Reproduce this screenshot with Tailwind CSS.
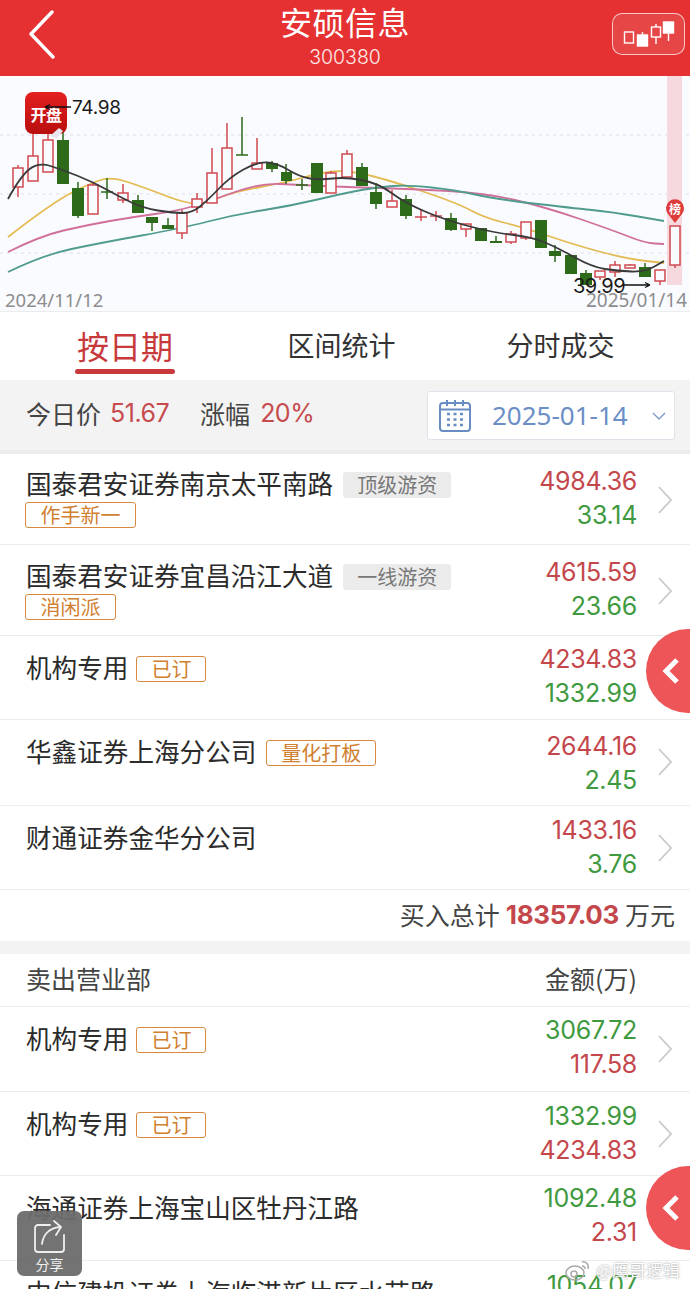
<!DOCTYPE html>
<html lang="zh">
<head>
<meta charset="UTF-8" />
<meta name="viewport" content="width=device-width, initial-scale=1.0" />
<title>安硕信息</title>
<script src="https://cdn.jsdelivr.net/npm/@tailwindcss/browser@4"></script>
</head>
<body class="bg-white">
<div class="relative w-[690px] h-[1289px] overflow-hidden bg-white text-[#2b2b2b] font-['Noto_Sans_CJK_SC','Noto_Sans',sans-serif]">

  <!-- header -->
  <header class="relative h-[76px] bg-[#e53131] text-white flex flex-col items-center">
    <svg class="absolute left-[28px] top-[10px]" width="28" height="50" viewBox="0 0 28 50" fill="none" stroke="#fff" stroke-width="3.4" stroke-linecap="round" stroke-linejoin="round"><path d="M24 2 3 24l22 23"/></svg>
    <h1 class="text-[32px] leading-[38px] mt-[2px] tracking-[0.5px]">安硕信息</h1>
    <p class="text-[19.500px] leading-[24px] mt-[5px] font-['Inter',sans-serif] font-light text-white/90">300380</p>
    <div class="absolute left-[612px] top-[13px] w-[73px] h-[42px] rounded-[10px] border border-white/70 bg-white/10 flex items-center justify-center">
      <svg width="60" height="32" viewBox="0 0 60 32" fill="none" stroke="#fff" stroke-width="1.400"><rect x="5.500" y="14" width="9" height="11"/><rect x="18.500" y="17" width="10" height="11" fill="#fff"/><path d="M23.500 14v3"/><rect x="32.500" y="9" width="9" height="10"/><path d="M37 6v3M37 19v7"/><rect x="44.500" y="4" width="10" height="11" fill="#fff"/><path d="M49.500 15v8"/></svg>
    </div>
  </header>

  <!-- k-line chart -->
  <section class="relative h-[236px] bg-[#fafbff] border-b border-[#ececec]">
    <svg class="absolute left-0 top-0" width="690" height="236" viewBox="0 76 690 236" fill="none">
      <path d="M0 135H690M0 194H690M0 253H690" stroke="#dcdfe6" stroke-dasharray="3 4"/>
      <rect x="667" y="76" width="15" height="209" fill="#f6d9df"/>
      <path data-pts="8 237 53 202 93 182 112 177 143 187 187 204 207 203 233 192 283 183 320 173 345 170 382 178 455 202 485 218 522 227 578 246 628 259 664 263" stroke="#e3bb52" stroke-width="1.800"/>
      <path data-pts="8 252 40 236 87 225 133 217 177 211 207 202 260 183 300 185 345 187 412 189 485 193 545 207 612 230 645 243 664 244" stroke="#d0709a" stroke-width="1.800"/>
      <path data-pts="8 272 43 255 100 243 183 228 233 215 290 206 345 193 378 187 408 185 455 190 495 199 572 208 612 212 664 221" stroke="#4f9c8e" stroke-width="1.800"/>
      <!-- red wicks -->
      <path d="M18 165V197M33 113V181M48 130V172M93 183V214M123 184V203M182 210V239M197 193V213M212 148V203M227 123V189M257 138V169M331 171V193M347 150V177M392 190V207M421 210V221M436 211V221M466 224V237M511 231V244M526 222V240M600 271V280M615 261V277M630 264V268M660 270V285M675 226V268" stroke="#cf4a50" stroke-width="1.500"/>
      <!-- green wicks -->
      <path d="M63 130V184M78 182V218M107 178V199M138 195V213M152 217V231M168 218V229M242 117V155M272 161V172M286 164V184M302 179V190M362 163V186M376 183V209M406 195V219M451 213V231M496 236V243M555 245V262M586 270V285M645 263V277" stroke="#2d6a1a" stroke-width="1.500"/>
      <!-- red bodies -->
      <path d="M13 168h10v19h-10zM28 156h10v25h-10zM43 140h10v32h-10zM88 185h10v29h-10zM118 193h10v7h-10zM177 213h10v20h-10zM192 199h10v8h-10zM207 173h10v30h-10zM222 148h10v41h-10zM252 163h10v6h-10zM326 173h10v20h-10zM342 154h10v23h-10zM387 201h10v6h-10zM461 224h10v5h-10zM506 234h10v8h-10zM521 222h10v16h-10zM595 271h10v6h-10zM610 265h10v7h-10zM625 265h10v3h-10zM655 270h10v11h-10zM670 226h10v39h-10z" fill="#fafbff" stroke="#cf4a50" stroke-width="1.500"/>
      <path d="M415 217h12M430 216h12" stroke="#cf4a50" stroke-width="1.500"/>
      <!-- green bodies -->
      <path d="M57 140h12v44h-12zM72 188h12v28h-12zM132 200h12v13h-12zM146 217h12v6h-12zM162 225h12v4h-12zM266 163h12v6h-12zM281 172h11v9h-11zM311 163h12v30h-12zM356 167h12v19h-12zM370 192h12v12h-12zM400 199h12v17h-12zM445 218h12v12h-12zM475 228h12v13h-12zM490 241h12v2h-12zM535 220h12v28h-12zM549 251h12v5h-12zM565 255h12v19h-12zM580 273h12v12h-12zM639 267h12v10h-12z" fill="#2d6a1a"/>
      <path d="M236 155h12M101 192h12M296 185h12" stroke="#2d6a1a" stroke-width="1.600"/>
      <!-- MA5 -->
      <path data-pts="8 199 20 177 38 162 63 170 93 182 120 197 143 208 173 213 192 213 208 200 230 177 257 162 277 163 300 177 320 180 345 177 378 183 405 203 445 220 495 233 532 237 558 248 592 267 618 271 645 272 664 261" stroke="#3a3a3a" stroke-width="1.800"/>
      <path d="M623 285H650M650 285l-5-2.500M650 285l-5 2.500" stroke="#111" stroke-width="1.300"/>
      <path d="M668 214a9 9 0 1 1 14 0l-7 9z" fill="#df3b3b"/>
    </svg>
    <div class="absolute left-[25px] top-[16px] w-[42px] h-[42px] rounded-[8px] bg-gradient-to-b from-[#e41f1f] to-[#b80f0f] flex items-center justify-center text-white text-[16px] font-bold tracking-[-0.5px] pt-[2px]">开盘</div>
    <svg class="absolute left-[40px] top-[24px]" width="36" height="38" viewBox="0 0 36 38" fill="none">
      <path d="M5 7H31M5 7l5-2.500M5 7l5 2.500" stroke="#111" stroke-width="1.300"/>
      <path d="M10 36l9-8 4 3-6 7z" fill="#e9e4ee"/>
    </svg>
    <span class="absolute left-[72px] top-[20px] text-[19px] tracking-[-0.3px] leading-[24px] font-['Inter',sans-serif] text-[#1a1a1a]">74.98</span>
    <span class="absolute left-[5px] top-[212px] text-[18.500px] leading-[24px] font-['Noto_Sans',sans-serif] text-[#8d8d8d]">2024/11/12</span>
    <span class="absolute left-[586px] top-[212px] text-[19px] leading-[24px] font-['Noto_Sans',sans-serif] text-[#8d8d8d] whitespace-nowrap">2025/01/14</span>
    <span class="absolute left-[573px] top-[198px] text-[20px] tracking-[-0.5px] leading-[24px] font-['Inter',sans-serif] text-[#1a1a1a]">39.99</span>
    <span class="absolute left-[668px] top-[125px] w-[14px] text-center text-white text-[12px] leading-[16px] font-bold">榜</span>
  </section>

  <!-- tabs -->
  <nav class="h-[68px] flex items-start">
    <div class="w-[250px] flex flex-col items-center">
      <span class="text-[32px] leading-[44px] mt-[11px] text-[#c8393c]">按日期</span>
      <span class="w-[100px] h-[5px] rounded-full bg-[#c8393c] mt-[2px]"></span>
    </div>
    <span class="w-[183px] text-center text-[27px] leading-[40px] mt-[13px] text-[#333]">区间统计</span>
    <span class="w-[257px] pr-[2px] text-center text-[27px] leading-[40px] mt-[13px] text-[#333]">分时成交</span>
  </nav>

  <!-- date filter -->
  <div class="h-[74px] bg-[#f3f3f3] border-b-[4px] border-[#ececec] flex items-center pl-[26px] pr-[15px] pb-[2px]">
    <span class="text-[25px] text-[#444]">今日价</span>
    <span class="text-[25px] text-[#c64a4e] ml-[9px] font-['Inter',sans-serif] tracking-[-0.5px]">51.67</span>
    <span class="text-[25px] text-[#444] ml-[31px]">涨幅</span>
    <span class="text-[25px] text-[#c64a4e] ml-[10px] font-['Inter',sans-serif] tracking-[-0.5px]">20%</span>
    <div class="ml-auto w-[248px] h-[49px] mt-[3px] bg-white border border-[#e0e3ea] rounded-[3px] flex items-center pl-[11px] pr-[8px]">
      <svg width="32" height="34" viewBox="0 0 32 34" fill="none" stroke="#6a8cc4" stroke-width="2"><rect x="1" y="4" width="30" height="28" rx="3"/><path d="M1 10.500H31M8 1v6M16 1v6M24 1v6"/><path d="M8 15h3M14.500 15h3M21 15h3M8 20.500h3M14.500 20.500h3M21 20.500h3M8 26h3M14.500 26h3M21 26h3" stroke-width="2.600"/></svg>
      <span class="ml-[21px] text-[26px] text-[#6b8ec6] font-['Noto_Sans',sans-serif]">2025-01-14</span>
      <svg class="ml-auto" width="14" height="8" viewBox="0 0 14 8" fill="none" stroke="#7a97c8" stroke-width="1.300"><path d="M1 1l6 6 6-6"/></svg>
    </div>
  </div>

  <!-- buy list -->
  <div>
    <div class="h-[91px] border-b border-[#ededed] flex pl-[26px] pr-[18px]">
      <div class="flex-1 pt-[13px]">
        <div class="flex items-center h-[36px]">
          <span class="text-[25.600px] leading-[36px] mb-[4px]">国泰君安证券南京太平南路</span>
          <span class="ml-[10px] h-[26px] w-[108px] rounded-[3px] bg-[#ebebeb] text-[#777] text-[20px] leading-[26px] text-center">顶级游资</span>
        </div>
        <span class="block w-[111px] h-[26px] border border-[#d9883e] rounded-[3px] text-[#d0802f] text-[20px] leading-[24px] text-center -ml-[1px] mt-[-1px]">作手新一</span>
      </div>
      <div class="w-[120px] pt-[10px] text-right text-[25px] tracking-[-0.300px] leading-[34px] font-['Inter',sans-serif]"><p class="text-[#c4474c]">4984.36</p><p class="text-[#3f9a3f]">33.14</p></div>
      <svg class="ml-[21px] mt-[32px]" width="14" height="28" viewBox="0 0 14 28" fill="none" stroke="#c9c9c9" stroke-width="1.800"><path d="M1 1l12 13L1 27"/></svg>
    </div>
    <div class="h-[91px] border-b border-[#ededed] flex pl-[26px] pr-[18px]">
      <div class="flex-1 pt-[14px]">
        <div class="flex items-center h-[36px]">
          <span class="text-[25.600px] leading-[36px] mb-[4px]">国泰君安证券宜昌沿江大道</span>
          <span class="ml-[10px] h-[26px] w-[108px] rounded-[3px] bg-[#ebebeb] text-[#777] text-[20px] leading-[26px] text-center">一线游资</span>
        </div>
        <span class="block w-[91px] h-[26px] border border-[#d9883e] rounded-[3px] text-[#d0802f] text-[20px] leading-[24px] text-center -ml-[1px] mt-[-1px]">消闲派</span>
      </div>
      <div class="w-[120px] pt-[10px] text-right text-[25px] tracking-[-0.300px] leading-[34px] font-['Inter',sans-serif]"><p class="text-[#c4474c]">4615.59</p><p class="text-[#3f9a3f]">23.66</p></div>
      <svg class="ml-[21px] mt-[32px]" width="14" height="28" viewBox="0 0 14 28" fill="none" stroke="#c9c9c9" stroke-width="1.800"><path d="M1 1l12 13L1 27"/></svg>
    </div>
    <div class="h-[84px] border-b border-[#ededed] flex pl-[26px] pr-[18px]">
      <div class="flex-1 pt-[15px]">
        <div class="flex items-center h-[36px]">
          <span class="text-[25.600px] leading-[36px] mb-[4px]">机构专用</span>
          <span class="ml-[8px] h-[26px] w-[70px] border border-[#d9883e] rounded-[3px] text-[#d0802f] text-[20px] leading-[24px] text-center">已订</span>
        </div>
      </div>
      <div class="w-[120px] pt-[6px] text-right text-[25px] tracking-[-0.300px] leading-[34px] font-['Inter',sans-serif]"><p class="text-[#c4474c]">4234.83</p><p class="text-[#3f9a3f]">1332.99</p></div>
      <svg class="ml-[21px] mt-[28px]" width="14" height="28" viewBox="0 0 14 28" fill="none" stroke="#c9c9c9" stroke-width="1.800"><path d="M1 1l12 13L1 27"/></svg>
    </div>
    <div class="h-[86px] border-b border-[#ededed] flex pl-[26px] pr-[18px]">
      <div class="flex-1 pt-[15px]">
        <div class="flex items-center h-[36px]">
          <span class="text-[25.600px] leading-[36px] mb-[4px]">华鑫证券上海分公司</span>
          <span class="ml-[10px] h-[26px] w-[110px] border border-[#d9883e] rounded-[3px] text-[#d0802f] text-[20px] leading-[24px] text-center">量化打板</span>
        </div>
      </div>
      <div class="w-[120px] pt-[9px] text-right text-[25px] tracking-[-0.300px] leading-[34px] font-['Inter',sans-serif]"><p class="text-[#c4474c]">2644.16</p><p class="text-[#3f9a3f]">2.45</p></div>
      <svg class="ml-[21px] mt-[28px]" width="14" height="28" viewBox="0 0 14 28" fill="none" stroke="#c9c9c9" stroke-width="1.800"><path d="M1 1l12 13L1 27"/></svg>
    </div>
    <div class="h-[84px] border-b border-[#ededed] flex pl-[26px] pr-[18px]">
      <div class="flex-1 pt-[13px]">
        <span class="text-[25.600px] leading-[36px]">财通证券金华分公司</span>
      </div>
      <div class="w-[120px] pt-[7px] text-right text-[25px] tracking-[-0.300px] leading-[34px] font-['Inter',sans-serif]"><p class="text-[#c4474c]">1433.16</p><p class="text-[#3f9a3f]">3.76</p></div>
      <svg class="ml-[21px] mt-[28px]" width="14" height="28" viewBox="0 0 14 28" fill="none" stroke="#c9c9c9" stroke-width="1.800"><path d="M1 1l12 13L1 27"/></svg>
    </div>
    <div class="h-[51px] flex items-center justify-end pr-[15px] pb-[2px] text-[25px] text-[#444]">
      买入总计<span class="mx-[6px] text-[26px] text-[#c4474c] font-bold font-['Inter',sans-serif] tracking-[-0.300px]">18357.03</span>万元
    </div>
  </div>

  <div class="h-[13px] bg-[#f3f3f3]"></div>

  <!-- sell list -->
  <div>
    <div class="h-[53px] border-b border-[#ededed] flex items-center justify-between pl-[26px] pr-[53px] pb-[2px] text-[25px] text-[#444]">
      <span>卖出营业部</span><span>金额(万)</span>
    </div>
    <div class="h-[85px] border-b border-[#ededed] flex pl-[26px] pr-[18px]">
      <div class="flex-1 pt-[15px]">
        <div class="flex items-center h-[36px]">
          <span class="text-[25.600px] leading-[36px] mb-[4px]">机构专用</span>
          <span class="ml-[8px] h-[26px] w-[70px] border border-[#d9883e] rounded-[3px] text-[#d0802f] text-[20px] leading-[24px] text-center">已订</span>
        </div>
      </div>
      <div class="w-[120px] pt-[6px] text-right text-[25px] tracking-[-0.300px] leading-[34px] font-['Inter',sans-serif]"><p class="text-[#3f9a3f]">3067.72</p><p class="text-[#c4474c]">117.58</p></div>
      <svg class="ml-[21px] mt-[28px]" width="14" height="28" viewBox="0 0 14 28" fill="none" stroke="#c9c9c9" stroke-width="1.800"><path d="M1 1l12 13L1 27"/></svg>
    </div>
    <div class="h-[84px] border-b border-[#ededed] flex pl-[26px] pr-[18px]">
      <div class="flex-1 pt-[15px]">
        <div class="flex items-center h-[36px]">
          <span class="text-[25.600px] leading-[36px] mb-[4px]">机构专用</span>
          <span class="ml-[8px] h-[26px] w-[70px] border border-[#d9883e] rounded-[3px] text-[#d0802f] text-[20px] leading-[24px] text-center">已订</span>
        </div>
      </div>
      <div class="w-[120px] pt-[7px] text-right text-[25px] tracking-[-0.300px] leading-[34px] font-['Inter',sans-serif]"><p class="text-[#3f9a3f]">1332.99</p><p class="text-[#c4474c]">4234.83</p></div>
      <svg class="ml-[21px] mt-[28px]" width="14" height="28" viewBox="0 0 14 28" fill="none" stroke="#c9c9c9" stroke-width="1.800"><path d="M1 1l12 13L1 27"/></svg>
    </div>
    <div class="h-[85px] border-b border-[#ededed] flex pl-[26px] pr-[18px]">
      <div class="flex-1 pt-[13px]">
        <span class="text-[25.600px] leading-[36px]">海通证券上海宝山区牡丹江路</span>
      </div>
      <div class="w-[120px] pt-[5px] text-right text-[25px] tracking-[-0.300px] leading-[34px] font-['Inter',sans-serif]"><p class="text-[#3f9a3f]">1092.48</p><p class="text-[#c4474c]">2.31</p></div>
      <svg class="ml-[21px] mt-[28px]" width="14" height="28" viewBox="0 0 14 28" fill="none" stroke="#c9c9c9" stroke-width="1.800"><path d="M1 1l12 13L1 27"/></svg>
    </div>
    <div class="h-[85px] flex pl-[26px] pr-[18px]">
      <div class="flex-1 pt-[13px]">
        <span class="text-[25.600px] leading-[36px]">中信建投证券上海临港新片区水芸路</span>
      </div>
      <div class="w-[120px] pt-[7px] text-right text-[25px] tracking-[-0.300px] leading-[34px] font-['Inter',sans-serif]"><p class="text-[#3f9a3f]">1054.07</p></div>
      <svg class="ml-[21px] mt-[28px]" width="14" height="28" viewBox="0 0 14 28" fill="none" stroke="#c9c9c9" stroke-width="1.800"><path d="M1 1l12 13L1 27"/></svg>
    </div>
  </div>

  <!-- floating buttons -->
  <div class="absolute left-[646px] top-[629px] w-[84px] h-[84px] rounded-full bg-[#ee5558] flex items-center pl-[16px]">
    <svg width="18" height="28" viewBox="0 0 18 28" fill="none" stroke="#fff" stroke-width="5"><path d="M15 3 4 14l11 11"/></svg>
  </div>
  <div class="absolute left-[646px] top-[1166px] w-[84px] h-[84px] rounded-full bg-[#ee5558] flex items-center pl-[16px]">
    <svg width="18" height="28" viewBox="0 0 18 28" fill="none" stroke="#fff" stroke-width="5"><path d="M15 3 4 14l11 11"/></svg>
  </div>

  <div class="absolute left-[17px] top-[1211px] w-[65px] h-[65px] rounded-[7px] bg-[#6b6b6b]/95 flex flex-col items-center text-white/90">
    <svg class="mt-[9px]" width="34" height="34" viewBox="0 0 34 34" fill="none" stroke="#eee" stroke-width="1.800" stroke-linecap="round" stroke-linejoin="round"><path d="M17 5H5a3 3 0 0 0-3 3v21a3 3 0 0 0 3 3h23a3 3 0 0 0 3-3V15"/><path d="M9 24c1-8 6-16 18-17M21 1l7 6-5 8"/></svg>
    <span class="text-[14px] leading-[18px] mt-[1px]">分享</span>
  </div>

  <div class="absolute left-[565px] top-[1258px] flex items-center text-white text-[17px] leading-[24px] [text-shadow:0_0_2px_#888]">
    <svg width="26" height="24" viewBox="0 0 26 24" fill="none" stroke="#aaa" stroke-width="1.500"><ellipse cx="10" cy="15" rx="9" ry="7"/><circle cx="9" cy="16" r="3"/><path d="M17 4c4-1 7 2 6 7M17 8c2 0 3 1 3 3"/></svg>
    <span class="ml-[5px]">@鹰哥逻辑</span>
  </div>
</div>
<script>
  // smooth the moving-average lines through their sample points
  document.querySelectorAll('path[data-pts]').forEach(function (line) {
    var n = line.getAttribute('data-pts').split(' ').map(Number);
    var d = 'M' + n[0] + ' ' + n[1];
    for (var i = 2; i < n.length - 2; i += 2) {
      d += 'Q' + n[i] + ' ' + n[i + 1] + ' ' + (n[i] + n[i + 2]) / 2 + ' ' + (n[i + 1] + n[i + 3]) / 2;
    }
    d += 'L' + n[n.length - 2] + ' ' + n[n.length - 1];
    line.setAttribute('d', d);
  });
</script>
</body>
</html>
